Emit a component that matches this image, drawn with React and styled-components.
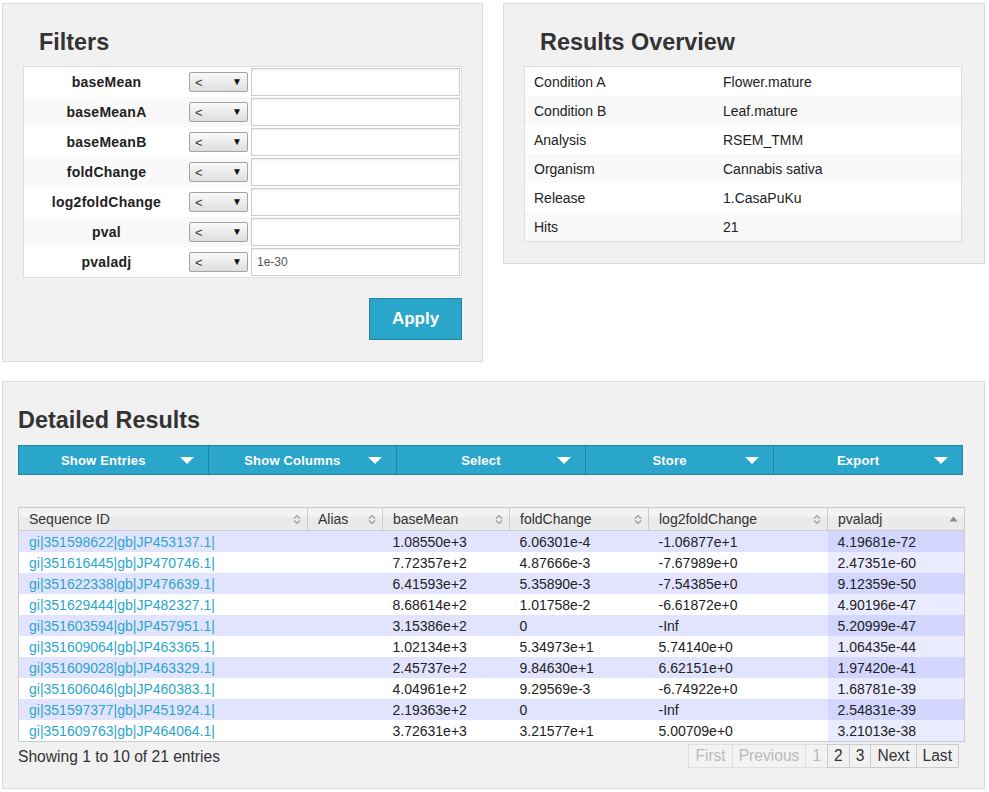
import React from "react";
import styled, { createGlobalStyle } from "styled-components";

const GlobalStyle = createGlobalStyle`
  body {
    margin: 0;
    background: #fff;
    font-family: "Liberation Sans", Arial, sans-serif;
    font-size: 13px;
    color: #222;
  }
`;

const filters = [
  { name: "baseMean", value: "" },
  { name: "baseMeanA", value: "" },
  { name: "baseMeanB", value: "" },
  { name: "foldChange", value: "" },
  { name: "log2foldChange", value: "" },
  { name: "pval", value: "" },
  { name: "pvaladj", value: "1e-30" },
];

const overview = [
  ["Condition A", "Flower.mature"],
  ["Condition B", "Leaf.mature"],
  ["Analysis", "RSEM_TMM"],
  ["Organism", "Cannabis sativa"],
  ["Release", "1.CasaPuKu"],
  ["Hits", "21"],
];

const tools = ["Show Entries", "Show Columns", "Select", "Store", "Export"];

const columns = [
  { label: "Sequence ID", width: 289 },
  { label: "Alias", width: 75 },
  { label: "baseMean", width: 127 },
  { label: "foldChange", width: 139 },
  { label: "log2foldChange", width: 179 },
  { label: "pvaladj", width: 137, sorted: true },
];

const rows = [
  ["gi|351598622|gb|JP453137.1|", "1.08550e+3", "6.06301e-4", "-1.06877e+1", "4.19681e-72"],
  ["gi|351616445|gb|JP470746.1|", "7.72357e+2", "4.87666e-3", "-7.67989e+0", "2.47351e-60"],
  ["gi|351622338|gb|JP476639.1|", "6.41593e+2", "5.35890e-3", "-7.54385e+0", "9.12359e-50"],
  ["gi|351629444|gb|JP482327.1|", "8.68614e+2", "1.01758e-2", "-6.61872e+0", "4.90196e-47"],
  ["gi|351603594|gb|JP457951.1|", "3.15386e+2", "0", "-Inf", "5.20999e-47"],
  ["gi|351609064|gb|JP463365.1|", "1.02134e+3", "5.34973e+1", "5.74140e+0", "1.06435e-44"],
  ["gi|351609028|gb|JP463329.1|", "2.45737e+2", "9.84630e+1", "6.62151e+0", "1.97420e-41"],
  ["gi|351606046|gb|JP460383.1|", "4.04961e+2", "9.29569e-3", "-6.74922e+0", "1.68781e-39"],
  ["gi|351597377|gb|JP451924.1|", "2.19363e+2", "0", "-Inf", "2.54831e-39"],
  ["gi|351609763|gb|JP464064.1|", "3.72631e+3", "3.21577e+1", "5.00709e+0", "3.21013e-38"],
];

const pages = [
  { label: "First", disabled: true },
  { label: "Previous", disabled: true },
  { label: "1", disabled: true },
  { label: "2" },
  { label: "3" },
  { label: "Next" },
  { label: "Last" },
];

const SortIcon = () => (
  <svg width="8" height="11" viewBox="0 0 8 11">
    <path d="M1 4.5 L4 1.5 L7 4.5 M1 6.5 L4 9.5 L7 6.5" fill="none" stroke="#999" strokeWidth="1.1" />
  </svg>
);

const SortedIcon = () => (
  <svg width="9" height="6" viewBox="0 0 9 6">
    <path d="M0.5 5.5 L4.5 0.5 L8.5 5.5 Z" fill="#888" />
  </svg>
);

const App = () => {
  return (
    <Page>
      <GlobalStyle />
      <TopRow>
        <Panel $pb={21}>
          <Title $indent={16}>Filters</Title>
          <FilterTable>
            <tbody>
              {filters.map((f) => (
                <tr key={f.name}>
                  <FilterLabel>{f.name}</FilterLabel>
                  <FilterControl>
                    <SelectBox>
                      <span>&lt;</span>
                      <Arrow>▼</Arrow>
                    </SelectBox>
                    <TextInput type="text" defaultValue={f.value} />
                  </FilterControl>
                </tr>
              ))}
            </tbody>
          </FilterTable>
          <Actions>
            <ApplyButton>Apply</ApplyButton>
          </Actions>
        </Panel>

        <Panel $pb={21}>
          <Title $indent={16}>Results Overview</Title>
          <OverviewTable>
            <tbody>
              {overview.map(([k, v]) => (
                <tr key={k}>
                  <OverviewKey>{k}</OverviewKey>
                  <OverviewValue>{v}</OverviewValue>
                </tr>
              ))}
            </tbody>
          </OverviewTable>
        </Panel>
      </TopRow>

      <ResultsPanel>
        <Title $mb={12}>Detailed Results</Title>
        <Toolbar>
          {tools.map((t) => (
            <ToolButton key={t}>
              {t}
              <Caret />
            </ToolButton>
          ))}
        </Toolbar>

        <DataTable>
          <colgroup>
            {columns.map((c) => (
              <col key={c.label} style={{ width: c.width }} />
            ))}
          </colgroup>
          <thead>
            <tr>
              {columns.map((c) => (
                <HeadCell key={c.label}>
                  <HeadInner>
                    <span>{c.label}</span>
                    {c.sorted ? <SortedIcon /> : <SortIcon />}
                  </HeadInner>
                </HeadCell>
              ))}
            </tr>
          </thead>
          <tbody>
            {rows.map((r, i) => (
              <DataRow key={r[0]} $odd={i % 2 === 0}>
                <Cell>
                  <IdLink href="#">{r[0]}</IdLink>
                </Cell>
                <Cell />
                <Cell>{r[1]}</Cell>
                <Cell>{r[2]}</Cell>
                <Cell>{r[3]}</Cell>
                <SortedCell $odd={i % 2 === 0}>{r[4]}</SortedCell>
              </DataRow>
            ))}
          </tbody>
        </DataTable>

        <Footer>
          <Info>Showing 1 to 10 of 21 entries</Info>
          <Pager>
            {pages.map((p) => (
              <PageButton key={p.label} $disabled={p.disabled}>
                {p.label}
              </PageButton>
            ))}
          </Pager>
        </Footer>
      </ResultsPanel>
    </Page>
  );
};

const Page = styled.div`
  width: 983px;
  padding: 3px 0 0 2px;
  display: flex;
  flex-direction: column;
  gap: 19px;
`;

const TopRow = styled.div`
  display: flex;
  align-items: flex-start;
  gap: 20px;
`;

const Panel = styled.section`
  box-sizing: border-box;
  flex: 0 0 481px;
  background: #f1f1f1;
  border: 1px solid #dcdcdc;
  padding: 25px 20px ${(p) => p.$pb}px 20px;
  &:last-child {
    flex-basis: 482px;
  }
`;

const Title = styled.h2`
  margin: 0 0 ${(p) => p.$mb || 11}px 0;
  padding-left: ${(p) => p.$indent || 0}px;
  font-size: 23.4px;
  font-weight: bold;
  line-height: 26px;
  color: #333;
`;

const FilterTable = styled.table`
  width: 439px;
  border-collapse: collapse;
  background: #fff;
  border: 1px solid #ddd;
  tr:nth-child(even) {
    background: #f9f9f9;
  }
`;

const FilterLabel = styled.td`
  width: 165px;
  height: 30px;
  padding: 0;
  text-align: center;
  font-size: 14px;
  font-weight: bold;
  letter-spacing: 0.25px;
  color: #222;
`;

const FilterControl = styled.td`
  padding: 0;
  height: 30px;
  & > * {
    vertical-align: middle;
  }
`;

const SelectBox = styled.div`
  position: relative;
  display: inline-flex;
  align-items: center;
  box-sizing: border-box;
  width: 59px;
  height: 20px;
  padding: 0 5px;
  border: 1px solid #a3a3a3;
  border-radius: 2px;
  background: linear-gradient(#f9f9f9, #dedede);
  font-size: 13px;
  color: #333;
`;

const Arrow = styled.span`
  position: absolute;
  right: 5px;
  top: 3px;
  font-size: 10px;
  color: #111;
`;

const TextInput = styled.input`
  box-sizing: border-box;
  width: 209px;
  height: 28px;
  margin-left: 3px;
  padding: 0 5px;
  border: 1px solid #ccc;
  box-shadow: inset 0 1px 2px rgba(0, 0, 0, 0.08);
  background: #fff;
  font-family: "Liberation Sans", Arial, sans-serif;
  font-size: 12px;
  color: #555;
  outline: none;
`;

const Actions = styled.div`
  display: flex;
  justify-content: flex-end;
  margin-top: 20px;
`;

const ApplyButton = styled.button`
  box-sizing: border-box;
  width: 93px;
  height: 42px;
  background: #2ba6cb;
  border: 1px solid #2284a1;
  color: #fff;
  font-family: "Liberation Sans", Arial, sans-serif;
  font-size: 17px;
  font-weight: bold;
  cursor: pointer;
`;

const OverviewTable = styled.table`
  width: 438px;
  table-layout: fixed;
  border-collapse: collapse;
  background: #fff;
  border: 1px solid #ddd;
  tr:nth-child(even) {
    background: #f9f9f9;
  }
`;

const OverviewKey = styled.td`
  width: 171px;
  height: 29px;
  padding: 0 9px;
  font-size: 14px;
  color: #222;
`;

const OverviewValue = styled.td`
  height: 29px;
  padding: 0 9px;
  font-size: 14px;
  color: #222;
`;

const ResultsPanel = styled.section`
  box-sizing: border-box;
  width: 983px;
  height: 408px;
  background: #f1f1f1;
  border: 1px solid #dcdcdc;
  padding: 25px 20px 20px 15px;
`;

const Toolbar = styled.div`
  display: grid;
  grid-template-columns: repeat(5, 1fr);
  width: 945px;
  height: 30px;
  box-sizing: border-box;
  border: 1px solid #2284a1;
  background: #2ba6cb;
  margin-bottom: 32px;
`;

const ToolButton = styled.div`
  position: relative;
  display: flex;
  align-items: center;
  justify-content: center;
  padding-right: 20px;
  border-left: 1px solid #2284a1;
  color: #fff;
  font-size: 13px;
  font-weight: bold;
  letter-spacing: 0.2px;
  &:first-child {
    border-left: none;
  }
`;

const Caret = styled.span`
  position: absolute;
  right: 14px;
  top: 11px;
  width: 0;
  height: 0;
  border-left: 7px solid transparent;
  border-right: 7px solid transparent;
  border-top: 7px solid #fff;
`;

const DataTable = styled.table`
  width: 946px;
  table-layout: fixed;
  border-collapse: collapse;
  border: 1px solid #ccc;
  background: #fff;
`;

const HeadCell = styled.th`
  height: 22px;
  padding: 0 6px 0 10px;
  border-right: 1px solid #ccc;
  border-bottom: 1px solid #ccc;
  background: linear-gradient(#f3f3f3 0%, #f3f3f3 35%, #eaeaea 40%, #eaeaea 100%);
  font-size: 14px;
  font-weight: normal;
  color: #333;
  text-align: left;
`;

const HeadInner = styled.div`
  display: flex;
  align-items: center;
  justify-content: space-between;
`;

const DataRow = styled.tr`
  background: ${(p) => (p.$odd ? "#e2e4ff" : "#fff")};
`;

const Cell = styled.td`
  height: 21px;
  padding: 0 10px;
  font-size: 14px;
  color: #222;
  white-space: nowrap;
  overflow: hidden;
`;

const SortedCell = styled(Cell)`
  background: ${(p) => (p.$odd ? "#d3d6ff" : "#eaebff")};
`;

const IdLink = styled.a`
  color: #2ba6cb;
  text-decoration: none;
`;

const Footer = styled.div`
  display: flex;
  justify-content: space-between;
  align-items: flex-start;
  width: 941px;
  margin-top: 2px;
`;

const Info = styled.div`
  padding-top: 4px;
  font-size: 15.6px;
  color: #333;
`;

const Pager = styled.div`
  display: flex;
`;

const PageButton = styled.span`
  box-sizing: border-box;
  height: 24px;
  line-height: 22px;
  padding: 0 6px;
  border: 1px solid ${(p) => (p.$disabled ? "#dfdfdf" : "#ccc")};
  margin-left: -1px;
  background: ${(p) => (p.$disabled ? "#f3f3f3" : "transparent")};
  font-size: 15.6px;
  color: ${(p) => (p.$disabled ? "#bbb" : "#333")};
  cursor: pointer;
`;

export default App;
